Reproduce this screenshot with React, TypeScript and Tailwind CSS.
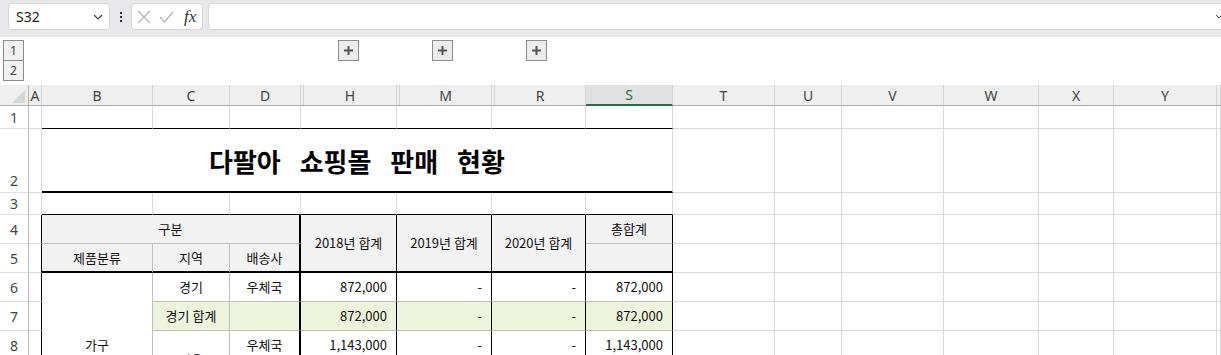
import React from 'react';

const KR = "font-['Noto_Sans_CJK_KR',sans-serif]";
const UI = "font-['Noto_Sans','Noto_Sans_CJK_KR',sans-serif]";

// default sheet gridlines
const GRID = 'border-r border-b border-[#dadada]';
const OLIVE = 'bg-[#eef3dc]';

const letters = ['A', 'B', 'C', 'D', 'H', 'M', 'R', 'S', 'T', 'U', 'V', 'W', 'X', 'Y', ''];
const hiddenBefore = ['H', 'M', 'R'];

const Cell: React.FC<{ className?: string; children?: React.ReactNode }> = ({ className = '', children }) => (
  <div className={`flex items-center overflow-hidden whitespace-nowrap ${className}`}>{children}</div>
);

const RowHead: React.FC<{ n: number; tall?: boolean }> = ({ n, tall }) => (
  <div
    className={`flex justify-center border-r border-r-[#bdbdbd] border-b border-b-[#e1e1e1] bg-white text-[14px] text-[#444] ${UI} ${
      tall ? 'items-end pb-[1px]' : 'items-center'
    }`}
  >
    {n}
  </div>
);

// columns T..Z, always empty
const Blanks: React.FC = () => (
  <>
    {Array.from({ length: 7 }).map((_, i) => (
      <div key={i} className={GRID} />
    ))}
  </>
);

const Num: React.FC<{ v: string; className: string }> = ({ v, className }) => (
  <Cell className={`justify-end pr-[9px] ${className}`}>{v}</Cell>
);

const PlusBox = () => (
  <div className="flex h-[21px] w-[21px] items-center justify-center border border-[#8c8c8c] bg-[#ececec]">
    <svg width="9" height="9" viewBox="0 0 9 9">
      <rect x="3.5" y="0" width="2" height="9" fill="#555" />
      <rect x="0" y="3.5" width="9" height="2" fill="#555" />
    </svg>
  </div>
);

const Toolbar = () => (
  <div className="flex h-[37px] items-start bg-[#e8e8eb] pt-[3px]">
    <div className="ml-[8px] flex h-[27px] w-[102px] items-center justify-between rounded-[4px] border border-[#d6d6d6] bg-white pl-[7px] pr-[6px]">
      <span className={`text-[14px] text-[#222] ${UI}`}>S32</span>
      <svg width="10" height="6" viewBox="0 0 10 6">
        <path d="M1 1l4 4 4-4" fill="none" stroke="#444" strokeWidth="1.2" />
      </svg>
    </div>
    <div className="flex h-[27px] w-[21px] flex-col items-center justify-center gap-[2px]">
      <span className="h-[2px] w-[2px] bg-[#333]" />
      <span className="h-[2px] w-[2px] bg-[#333]" />
      <span className="h-[2px] w-[2px] bg-[#333]" />
    </div>
    <div className="flex h-[27px] w-[72px] items-center rounded-[4px] border border-[#d6d6d6] bg-white pl-[5px]">
      <svg width="14" height="14" viewBox="0 0 14 14">
        <path d="M1 1l12 12M13 1L1 13" stroke="#b4b4b4" strokeWidth="1.2" />
      </svg>
      <svg width="15" height="14" viewBox="0 0 15 14" className="ml-[8px]">
        <path d="M1 7l4.5 5L14 2" fill="none" stroke="#b4b4b4" strokeWidth="1.2" />
      </svg>
      <span className="ml-[10px] font-['Liberation_Serif',serif] text-[17px] italic leading-none text-[#333]">fx</span>
    </div>
    <div className="-mr-[12px] ml-[5px] flex h-[27px] flex-1 items-center justify-end rounded-[4px] border border-[#d6d6d6] bg-white pr-[9px]">
      <svg width="8" height="5" viewBox="0 0 8 5">
        <path d="M1 1l3 3 3-3" fill="none" stroke="#444" strokeWidth="1" />
      </svg>
    </div>
  </div>
);

const OutlineBar = () => (
  <div className="flex h-[48px] bg-white">
    <div className={`flex w-[29px] flex-col pl-[3px] pt-[3px] text-[12px] text-[#444] ${UI}`}>
      <div className="flex h-[21px] w-[21px] items-center justify-center border border-[#8c8c8c] bg-[#f2f2f2]">1</div>
      <div className="-mt-px flex h-[21px] w-[21px] items-center justify-center border border-[#8c8c8c] bg-[#f2f2f2]">2</div>
    </div>
    <div className="flex gap-[73px] pl-[309px] pt-[3px]">
      <PlusBox />
      <PlusBox />
      <PlusBox />
    </div>
  </div>
);

export default function App() {
  const b1 = 'border-r border-[#dadada] border-b border-b-black';
  const hdrTop = 'bg-[#f2f2f2] justify-center';
  const bodyGray = 'border-r border-b border-[#bfbfbf]';
  const thickD = 'border-r-2 border-r-black border-b border-b-[#bfbfbf]';
  const numCol = 'border-r border-r-black border-b border-b-[#bfbfbf]';
  const aEdge = 'border-b border-[#dadada] border-r border-r-black';

  return (
    <div className="h-[355px] w-full overflow-hidden bg-white">
      <Toolbar />
      <OutlineBar />

      <div
        className={`grid grid-cols-[29px_13px_111px_77px_71px_96px_95px_94px_87px_102px_67px_102px_95px_75px_103px_1fr] grid-rows-[21px_23px_64px_22px_29px_29px_29px_29px_29px_29px_29px] text-[13px] text-[#111] ${KR}`}
      >
        {/* column headers */}
        <div className="flex items-end justify-end border-r border-b border-[#b5b5b5] bg-[#efefef] pb-[2px] pr-[3px]">
          <svg width="13" height="13" viewBox="0 0 13 13">
            <polygon points="13,0 13,13 0,13" fill="#d6d6d6" />
          </svg>
        </div>
        {letters.map((l, i) =>
          l === 'S' ? (
            <div
              key={i}
              className={`flex items-center justify-center border-r border-r-[#d4d4d4] border-b-2 border-b-[#217346] bg-[#e1e1e1] text-[14px] text-[#217346] ${UI}`}
            >
              S
            </div>
          ) : (
            <div
              key={i}
              className={`flex items-stretch border-r border-r-[#d4d4d4] border-b border-b-[#ababab] bg-[#efefef] text-[14px] text-[#444] ${UI}`}
            >
              {hiddenBefore.includes(l) && <span className="w-[3px] border-r border-[#d4d4d4]" />}
              <span className="flex flex-1 items-center justify-center">{l}</span>
            </div>
          )
        )}

        {/* row 1 */}
        <RowHead n={1} />
        <div className={GRID} />
        {Array.from({ length: 7 }).map((_, i) => (
          <div key={i} className={b1} />
        ))}
        <Blanks />

        {/* row 2: title */}
        <RowHead n={2} tall />
        <div className={GRID} />
        <Cell className="col-span-7 justify-center border-r border-r-[#dadada] border-b-2 border-b-black">
          <span className="text-[26px] font-bold text-black [word-spacing:13px]">다팔아 쇼핑몰 판매 현황</span>
        </Cell>
        <Blanks />

        {/* row 3 */}
        <RowHead n={3} />
        <div className={GRID} />
        {Array.from({ length: 7 }).map((_, i) => (
          <div key={i} className={b1} />
        ))}
        <Blanks />

        {/* row 4 */}
        <RowHead n={4} />
        <div className={aEdge} />
        <Cell className={`col-span-3 ${hdrTop} border-b border-b-[#bfbfbf] border-r-2 border-r-black`}>구분</Cell>
        <Cell className={`row-span-2 ${hdrTop} border-r border-r-black border-b-2 border-b-black`}>2018년 합계</Cell>
        <Cell className={`row-span-2 ${hdrTop} border-r border-r-black border-b-2 border-b-black`}>2019년 합계</Cell>
        <Cell className={`row-span-2 ${hdrTop} border-r border-r-black border-b-2 border-b-black`}>2020년 합계</Cell>
        <Cell className={`${hdrTop} border-r border-r-black border-b border-b-[#bfbfbf]`}>총합계</Cell>
        <Blanks />

        {/* row 5 */}
        <RowHead n={5} />
        <div className={aEdge} />
        <Cell className={`${hdrTop} border-r border-r-[#bfbfbf] border-b-2 border-b-black`}>제품분류</Cell>
        <Cell className={`${hdrTop} border-r border-r-[#bfbfbf] border-b-2 border-b-black`}>지역</Cell>
        <Cell className={`${hdrTop} border-r-2 border-b-2 border-black`}>배송사</Cell>
        <Cell className={`${hdrTop} border-r border-b-2 border-black`} />
        <Blanks />

        {/* row 6 */}
        <RowHead n={6} />
        <div className={aEdge} />
        <Cell className={`row-span-5 justify-center ${bodyGray}`}>가구</Cell>
        <Cell className={`justify-center ${bodyGray}`}>경기</Cell>
        <Cell className={`justify-center ${thickD}`}>우체국</Cell>
        <Num v="872,000" className={numCol} />
        <Num v="-" className={numCol} />
        <Num v="-" className={numCol} />
        <Num v="872,000" className={numCol} />
        <Blanks />

        {/* row 7 */}
        <RowHead n={7} />
        <div className={aEdge} />
        <Cell className={`justify-center ${OLIVE} ${bodyGray}`}>경기 합계</Cell>
        <Cell className={`${OLIVE} ${thickD}`} />
        <Num v="872,000" className={`${OLIVE} ${numCol}`} />
        <Num v="-" className={`${OLIVE} ${numCol}`} />
        <Num v="-" className={`${OLIVE} ${numCol}`} />
        <Num v="872,000" className={`${OLIVE} ${numCol}`} />
        <Blanks />

        {/* row 8 */}
        <RowHead n={8} />
        <div className={aEdge} />
        <Cell className={`row-span-2 justify-center ${bodyGray}`}>서울</Cell>
        <Cell className={`justify-center ${thickD}`}>우체국</Cell>
        <Num v="1,143,000" className={numCol} />
        <Num v="-" className={numCol} />
        <Num v="-" className={numCol} />
        <Num v="1,143,000" className={numCol} />
        <Blanks />

        {/* row 9 */}
        <RowHead n={9} />
        <div className={aEdge} />
        <Cell className={`justify-center ${thickD}`}>택배</Cell>
        <Num v="452,000" className={numCol} />
        <Num v="-" className={numCol} />
        <Num v="-" className={numCol} />
        <Num v="452,000" className={numCol} />
        <Blanks />

        {/* row 10 */}
        <RowHead n={10} />
        <div className={aEdge} />
        <Cell className={`justify-center ${OLIVE} ${bodyGray}`}>서울 합계</Cell>
        <Cell className={`${OLIVE} ${thickD}`} />
        <Num v="1,595,000" className={`${OLIVE} ${numCol}`} />
        <Num v="-" className={`${OLIVE} ${numCol}`} />
        <Num v="-" className={`${OLIVE} ${numCol}`} />
        <Num v="1,595,000" className={`${OLIVE} ${numCol}`} />
        <Blanks />
      </div>
    </div>
  );
}
